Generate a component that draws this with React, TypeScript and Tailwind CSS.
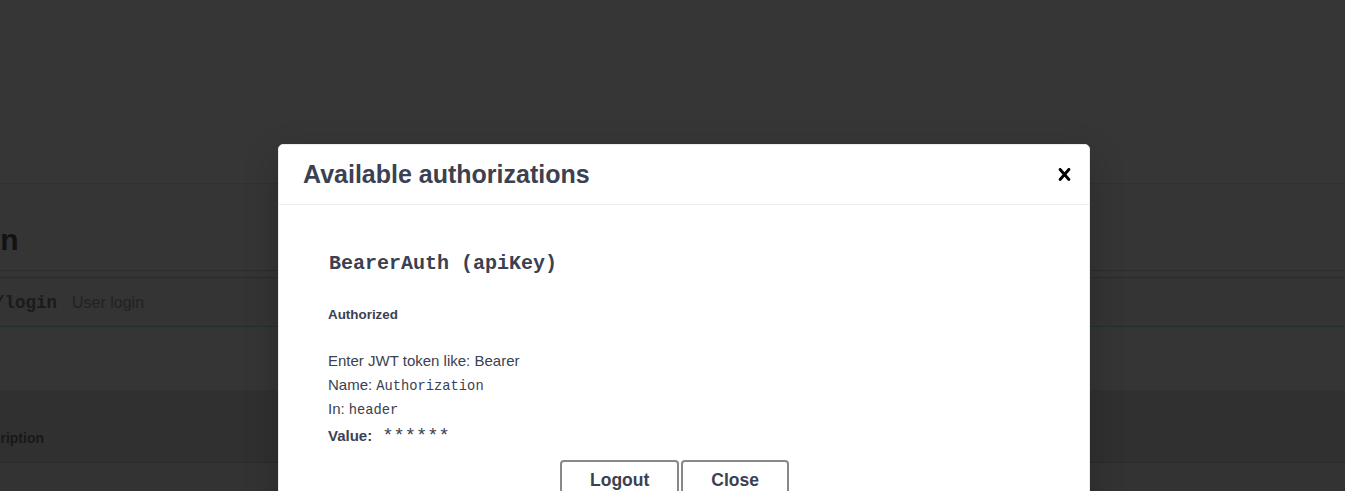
import React from 'react';

const sans = { fontFamily: '"Liberation Sans", Arial, sans-serif' };
const mono = { fontFamily: '"Liberation Mono", "DejaVu Sans Mono", monospace' };

const CloseIcon: React.FC = () => (
  <svg width="25" height="25" viewBox="0 0 20 20" aria-hidden="true">
    <path
      fill="#000"
      d="M14.348 14.849c-.469.469-1.229.469-1.697 0L10 11.819l-2.651 3.029c-.469.469-1.229.469-1.697 0-.469-.469-.469-1.229 0-1.697l2.758-3.15-2.759-3.152c-.469-.469-.469-1.228 0-1.697.469-.469 1.228-.469 1.697 0L10 8.183l2.651-3.031c.469-.469 1.228-.469 1.697 0 .469.469.469 1.229 0 1.697l-2.758 3.152 2.758 3.15c.469.469.469 1.229 0 1.698z"
    />
  </svg>
);

// the dimmed swagger page behind the backdrop
const BackgroundPage: React.FC = () => (
  <div className="w-full overflow-hidden bg-[#353535]" style={sans}>
    <div className="h-[184px] bg-[#363636] border-b border-[#303030]" />
    <div className="h-[87px] pt-[38px] border-b border-[#2c2c2c] overflow-hidden whitespace-nowrap">
      <span className="block ml-[-63px] text-[30px] leading-[36px] font-bold text-[#121212]">Login</span>
    </div>
    <div className="mt-[6px] h-[50px] bg-[#333433] border-y border-[#1f3129] flex items-center whitespace-nowrap overflow-hidden">
      <span className="ml-[-6px] mt-[2px] text-[17.5px] font-bold text-[#1b1b1b]" style={mono}>/login</span>
      <span className="ml-[15px] mt-[2px] text-[16px] text-[#222222]">User login</span>
    </div>
    <div className="h-[63px] bg-[#353535]" />
    <div className="h-[73px] pt-[38px] bg-[#303030] border-b border-[#2a2a2a] whitespace-nowrap overflow-hidden">
      <span className="block ml-[-33px] text-[14px] leading-[20px] font-bold text-[#181818]">Description</span>
    </div>
    <div className="h-[40px] bg-[#333333]" />
  </div>
);

const AuthModal: React.FC = () => (
  <div className="absolute left-[278px] top-[144px] w-[812px] bg-white border border-[#ebebeb] rounded-[5px] shadow-[0_12px_36px_0_rgba(0,0,0,0.2)]" style={sans}>
    <div className="h-[60px] flex items-center border-b border-[#ebebeb]">
      <h3 className="flex-1 pl-[24px] text-[25px] font-bold text-[#3b4151]">Available authorizations</h3>
      <button className="px-[12px] flex items-center" aria-label="Close modal">
        <CloseIcon />
      </button>
    </div>
    <div className="pl-[49px] pr-[50px] pt-[47px] pb-[20px] text-[#3b4151]">
      <h4 className="pl-[1px] h-[24px] text-[20px] leading-[24px] font-bold" style={mono}>BearerAuth (apiKey)</h4>
      <h6 className="mt-[31px] h-[16px] text-[13.4px] leading-[16px] font-bold">Authorized</h6>
      <div className="mt-[26px] text-[15px] leading-[24px]">
        <p className="h-[24px]">Enter JWT token like: Bearer</p>
        <p className="h-[24px]">
          Name: <code className="text-[13.75px] leading-none" style={mono}>Authorization</code>
        </p>
        <p className="h-[24px]">
          In: <code className="text-[13.75px] leading-none" style={mono}>header</code>
        </p>
      </div>
      <div className="mt-[3px] h-[24px] flex items-center text-[15px] leading-[24px]">
        <span className="font-bold">Value:</span>
        <code className="ml-[10px] text-[18.8px] leading-none" style={mono}>******</code>
      </div>
      <div className="mt-[12px] flex justify-center gap-[2px] pr-[18px]">
        <button className="border-2 border-[#888888] rounded-[4px] px-[28px] pt-[8px] pb-[5px] text-[17.5px] leading-[20px] font-bold text-[#3b4151]">
          Logout
        </button>
        <button className="border-2 border-[#888888] rounded-[4px] px-[28px] pt-[8px] pb-[5px] text-[17.5px] leading-[20px] font-bold text-[#3b4151]">
          Close
        </button>
      </div>
    </div>
  </div>
);

const App: React.FC = () => (
  <div className="relative w-full h-[491px] overflow-hidden bg-[#363636]">
    <BackgroundPage />
    <AuthModal />
  </div>
);

export default App;
